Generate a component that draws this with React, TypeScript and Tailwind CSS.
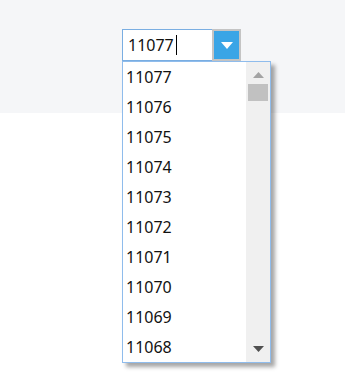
const items = [11077, 11076, 11075, 11074, 11073, 11072, 11071, 11070, 11069, 11068];

export default function App() {
  return (
    <div
      className="w-full h-[386px] bg-white"
      style={{ fontFamily: '"Noto Sans", "Liberation Sans", sans-serif' }}
    >
      {/* top band with the combobox */}
      <div className="relative h-[113px] bg-[#f5f6f8] pt-[29px] pl-[122px]">
        <div className="relative flex w-[119px] h-[32px]">
          <div className="flex items-center w-[92px] h-full bg-white border border-[#7aaee2] pl-[5px]">
            <span className="text-[16px] leading-none text-[#111]">11077</span>
            <span className="ml-[2px] w-px h-[20px] bg-black" />
          </div>
          <div className="flex items-center justify-center w-[29px] h-full -ml-[2px] bg-[#3aa5e6] border-2 border-[#c4c4c4]">
            <svg width="12" height="7" viewBox="0 0 12 7">
              <polygon points="0,0 12,0 6,7" fill="#fff" />
            </svg>
          </div>

          {/* dropdown list */}
          <div className="absolute left-0 top-[32px] z-10 flex w-[149px] h-[302px] bg-white border border-[#8fbcec] shadow-[4px_4px_4px_rgba(0,0,0,0.35)]">
            <ul className="flex-1 pl-[3px]">
              {items.map((n) => (
                <li key={n} className="h-[30px] leading-[30px] text-[16px] text-[#111]">
                  {n}
                </li>
              ))}
            </ul>
            <div className="flex flex-col items-center w-[24px] bg-[#f0f0f0]">
              <svg className="mt-[10px]" width="11" height="6" viewBox="0 0 11 6">
                <polygon points="0,6 11,6 5.5,0" fill="#a3a3a3" />
              </svg>
              <div className="mt-[6px] w-[20px] h-[17px] bg-[#c1c1c1]" />
              <svg className="mt-auto mb-[10px]" width="11" height="6" viewBox="0 0 11 6">
                <polygon points="0,0 11,0 5.5,6" fill="#505050" />
              </svg>
            </div>
          </div>
        </div>
      </div>
    </div>
  );
}
